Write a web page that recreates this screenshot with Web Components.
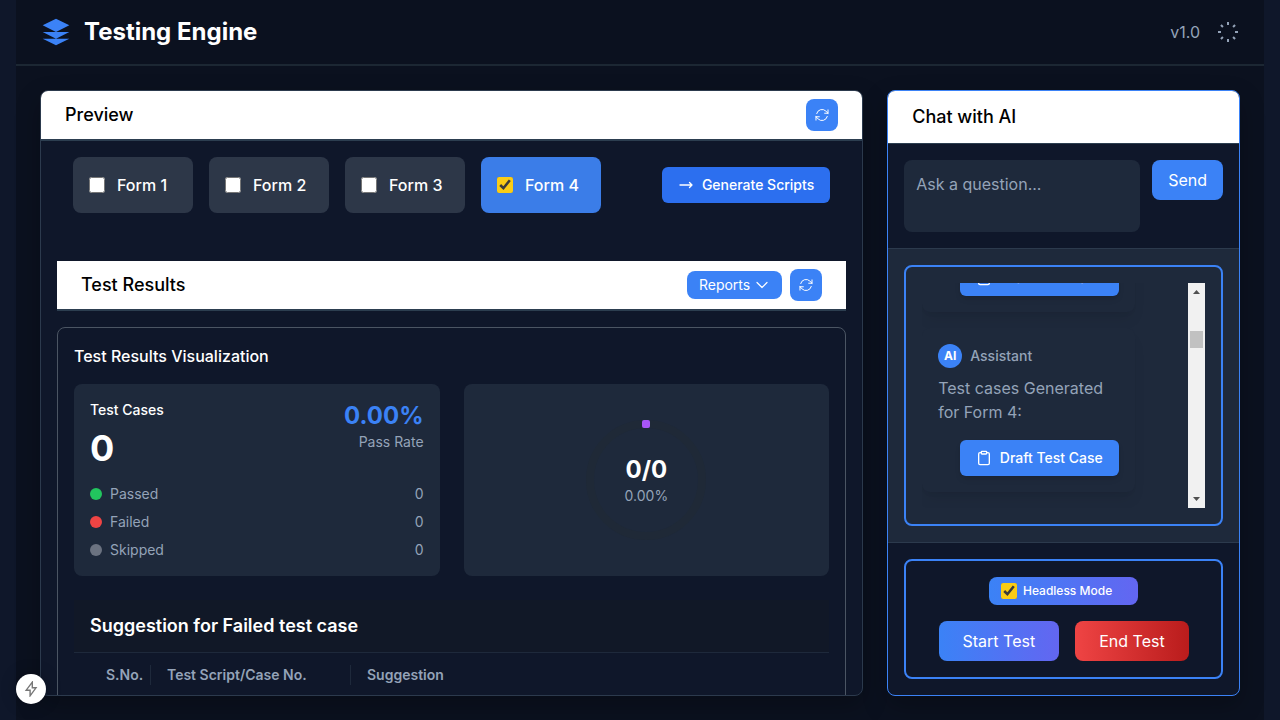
<!DOCTYPE html>
<html lang="en">
<head>
<meta charset="utf-8">
<meta name="viewport" content="width=device-width, initial-scale=1">
<title>Testing Engine</title>
<style>
  :root {
    --blue: #3b82f6;
    --panel: #0f172a;
    --card: #1e293b;
    --muted: #94a3b8;
    --line: #2c3e50;
  }
  body {
    margin: 0;
    background: #0f172a;
    color: #fff;
    font-family: Inter, "Liberation Sans", sans-serif;
    font-size: 16px;
    line-height: 24px;
    overflow: hidden;
  }
</style>
</head>
<body>
<testing-app></testing-app>

<script>
const define = (name, html, setup) => {
  const template = document.createElement('template');
  template.innerHTML = '<style>*{box-sizing:border-box}button,textarea{font:inherit}[hidden]{display:none}</style>' + html;
  customElements.define(name, class extends HTMLElement {
    constructor() {
      super();
      this.attachShadow({ mode: 'open' }).append(template.content.cloneNode(true));
    }
    connectedCallback() {
      if (setup) setup(this, this.shadowRoot);
    }
  });
};

/* ---------- icons ---------- */
const ICONS = {
  refresh: ['24', '1.5', '<path d="M16.023 9.348h4.992v-.001M2.985 19.644v-4.992m0 0h4.992m-4.993 0 3.181 3.183a8.25 8.25 0 0 0 13.803-3.7M4.031 9.865a8.25 8.25 0 0 1 13.803-3.7l3.181 3.182m0-4.991v4.99"/>'],
  arrow: ['24', '2', '<path d="M17.25 8.25 21 12m0 0-3.75 3.75M21 12H3"/>'],
  chevron: ['24', '1.8', '<path d="m19.5 8.25-7.5 7.5-7.5-7.5"/>'],
  clipboard: ['24', '2', '<rect x="8" y="2" width="8" height="4" rx="1"/><path d="M16 4h2a2 2 0 0 1 2 2v14a2 2 0 0 1-2 2H6a2 2 0 0 1-2-2V6a2 2 0 0 1 2-2h2"/>'],
  rays: ['24', '2', '<path stroke-linecap="butt" d="M12 2v3M12 19v3M2 12h3M19 12h3M4.93 4.93l2 2M17.07 17.07l2 2M4.93 19.07l2-2M17.07 6.93l2-2"/>'],
  bolt: ['16', '1.4', '<path stroke-linejoin="miter" d="M9.3 1.2 3.2 9.2h3.9v5.6l5.9-8H9.3z"/>'],
  layers: ['24', '0', '<path fill="currentColor" d="M12 2 2 7l10 5 10-5-10-5zM2 17l10 5 10-5M2 12l10 5 10-5"/>']
};
define('te-icon', `
  <style>
    :host { display: block; width: 16px; height: 16px; flex: none; }
    svg { display: block; width: 100%; height: 100%; }
  </style>
  <svg fill="none" stroke="currentColor" stroke-linecap="round" stroke-linejoin="round" aria-hidden="true"></svg>
`, (el, root) => {
  const [box, stroke, shape] = ICONS[el.getAttribute('name')];
  const svg = root.querySelector('svg');
  svg.setAttribute('viewBox', `0 0 ${box} ${box}`);
  svg.setAttribute('stroke-width', stroke);
  svg.innerHTML = shape;
});

/* ---------- button ---------- */
define('te-button', `
  <style>
    :host { display: block; flex: none; }
    button {
      display: flex; align-items: center; justify-content: center; gap: 8px;
      width: 100%; height: 40px; padding: 0 24px; margin: 0;
      border: 0; border-radius: 8px; background: var(--blue); color: #fff;
      font-size: 16px; line-height: 24px; cursor: pointer; white-space: nowrap;
    }
    :host([kind=send]) button { padding: 0 16px; }
    :host([kind=square]) button { width: 32px; height: 32px; padding: 0; }
    :host([kind=menu]) button { height: 28px; padding: 0 12px; gap: 4px; font-size: 14px; line-height: 20px; }
    :host([kind=action]) button, :host([kind=script]) button {
      height: 36px; padding: 0 16px; border-radius: 6px;
      font-size: 14px; line-height: 20px; font-weight: 500;
    }
    :host([kind=action]) button { box-shadow: 0 4px 6px -1px rgba(0,0,0,.1), 0 2px 4px -2px rgba(0,0,0,.1); }
    :host([kind=script]) button { background: #2c6fef; }
    :host([kind=start]) button { background: linear-gradient(to right, #3b82f6, #6366f1); }
    :host([kind=end]) button { background: linear-gradient(to right, #ef4444, #b91c1c); }
  </style>
  <button type="button"><slot></slot></button>
`, (el, root) => {
  if (el.hasAttribute('label')) root.querySelector('button').setAttribute('aria-label', el.getAttribute('label'));
});

/* ---------- selectable form ---------- */
define('form-option', `
  <style>
    :host { display: block; }
    label {
      display: flex; align-items: center; gap: 12px;
      min-width: 120px; height: 56px; padding: 0 16px;
      border-radius: 8px; background: #2d3748; font-weight: 500; white-space: nowrap;
    }
    :host([checked]) label { background: #3b7de8; }
    input { width: 16px; height: 16px; margin: 0; accent-color: #facc15; }
  </style>
  <label><input type="checkbox"><slot></slot></label>
`, (el, root) => {
  const box = root.querySelector('input');
  box.checked = el.hasAttribute('checked');
  box.onchange = () => el.toggleAttribute('checked', box.checked);
});

/* ---------- white title bar ---------- */
define('title-bar', `
  <style>
    :host { display: block; flex: none; }
    header {
      display: flex; align-items: center; gap: 8px;
      height: 50px; padding: 0 24px; background: #fff; color: #000;
      border-bottom: 2px solid var(--line);
    }
    :host([tall]) header { height: 53px; border-bottom-width: 1px; }
    h2 { flex: 1; margin: 0; font-size: 18px; line-height: 28px; font-weight: 500; }
  </style>
  <header><h2><slot></slot></h2><slot name="actions"></slot></header>
`);

/* ---------- page header ---------- */
define('app-header', `
  <style>
    :host { display: block; flex: none; }
    header {
      display: flex; align-items: center; gap: 12px;
      height: 66px; padding: 0 24px; border-bottom: 2px solid #1c2733;
    }
    .logo { width: 32px; height: 32px; color: var(--blue); }
    h1 { flex: 1; margin: 0; font-size: 24px; line-height: 32px; font-weight: 700; }
    .status { display: flex; align-items: center; gap: 16px; color: var(--muted); }
    .rays { width: 24px; height: 24px; }
  </style>
  <header>
    <te-icon class="logo" name="layers"></te-icon>
    <h1>Testing Engine</h1>
    <div class="status"><span>v1.0</span><te-icon class="rays" name="rays"></te-icon></div>
  </header>
`);

/* ---------- result summary ---------- */
define('result-summary', `
  <style>
    :host { display: block; padding: 16px; border-radius: 8px; background: var(--card); font-size: 14px; line-height: 20px; color: var(--muted); }
    .top { display: flex; justify-content: space-between; margin-bottom: 16px; }
    h4 { margin: 0 0 8px; font-size: 14px; font-weight: 500; color: #fff; }
    .total { font-size: 36px; line-height: 40px; font-weight: 700; color: #fff; }
    .pass { text-align: right; }
    .rate { font-size: 24px; line-height: 32px; font-weight: 700; color: var(--blue); }
    ul { display: grid; gap: 8px; margin: 0; padding: 0; list-style: none; }
    li { display: flex; align-items: center; gap: 8px; }
    .name { flex: 1; }
    i { width: 12px; height: 12px; border-radius: 50%; background: #6b7280; }
    .ok { background: #22c55e; }
    .bad { background: #ef4444; }
  </style>
  <div class="top">
    <div><h4>Test Cases</h4><div class="total">0</div></div>
    <div class="pass"><div class="rate">0.00%</div><div>Pass Rate</div></div>
  </div>
  <ul>
    <li><i class="ok"></i><span class="name">Passed</span><span>0</span></li>
    <li><i class="bad"></i><span class="name">Failed</span><span>0</span></li>
    <li><i></i><span class="name">Skipped</span><span>0</span></li>
  </ul>
`);

/* ---------- progress ring ---------- */
define('result-ring', `
  <style>
    :host { display: grid; place-items: center; border-radius: 8px; background: var(--card); }
    svg, .value { grid-area: 1 / 1; }
    svg { width: 128px; height: 128px; }
    .value { text-align: center; font-size: 14px; line-height: 20px; color: var(--muted); }
    strong { display: block; font-size: 24px; line-height: 32px; font-weight: 700; color: #fff; }
  </style>
  <svg viewBox="0 0 128 128" fill="none" aria-hidden="true">
    <circle cx="64" cy="64" r="56" stroke="#1f2937" stroke-width="8"/>
    <rect x="60" y="4" width="8" height="8" rx="2" fill="#a855f7"/>
  </svg>
  <div class="value"><strong>0/0</strong>0.00%</div>
`);

/* ---------- suggestions ---------- */
define('suggestion-table', `
  <style>
    :host { display: block; }
    h3 {
      margin: 0; padding: 12px 16px; background: #111827;
      border-bottom: 1px solid #1e293b; font-size: 18px; line-height: 28px; font-weight: 600;
    }
    .wrap { padding: 0 16px; }
    table { width: 100%; border-collapse: collapse; table-layout: fixed; font-size: 14px; line-height: 20px; color: var(--muted); }
    th { padding: 12px 0; text-align: left; font-weight: 600; }
    th span { display: block; padding-left: 16px; white-space: nowrap; }
    .no { width: 61px; }
    .case { width: 200px; }
    .no span, .case span { border-right: 1px solid #1e293b; }
  </style>
  <h3>Suggestion for Failed test case</h3>
  <div class="wrap">
    <table>
      <thead><tr>
        <th class="no" scope="col"><span>S.No.</span></th>
        <th class="case" scope="col"><span>Test Script/Case No.</span></th>
        <th scope="col"><span>Suggestion</span></th>
      </tr></thead>
    </table>
  </div>
`);

/* ---------- left panel ---------- */
define('preview-panel', `
  <style>
    :host {
      display: block; min-width: 0; overflow: hidden;
      border: 1px solid #2c3a4d; border-radius: 8px; background: var(--panel);
      box-shadow: 0 10px 24px rgba(0,0,0,.25);
    }
    .body { padding: 16px; }
    .forms { display: flex; align-items: center; gap: 16px; padding: 0 16px; margin-bottom: 48px; }
    .forms te-button { margin-left: auto; }
    .results { margin-top: 16px; padding: 16px; border: 1px solid #4b5563; border-radius: 8px; }
    h3 { margin: 0 0 16px; font-size: 16px; line-height: 24px; font-weight: 500; }
    .charts { display: grid; grid-template-columns: 1fr 1fr; gap: 24px; margin-bottom: 24px; }
  </style>
  <title-bar>Preview
    <te-button slot="actions" kind="square" label="Refresh preview"><te-icon name="refresh"></te-icon></te-button>
  </title-bar>
  <div class="body">
    <div class="forms">
      <form-option>Form 1</form-option>
      <form-option>Form 2</form-option>
      <form-option>Form 3</form-option>
      <form-option checked>Form 4</form-option>
      <te-button kind="script"><te-icon name="arrow"></te-icon>Generate Scripts</te-button>
    </div>
    <title-bar>Test Results
      <te-button slot="actions" kind="menu">Reports<te-icon name="chevron"></te-icon></te-button>
      <te-button slot="actions" kind="square" label="Refresh results"><te-icon name="refresh"></te-icon></te-button>
    </title-bar>
    <section class="results">
      <h3>Test Results Visualization</h3>
      <div class="charts"><result-summary></result-summary><result-ring></result-ring></div>
      <suggestion-table></suggestion-table>
    </section>
  </div>
`);

/* ---------- chat message ---------- */
define('chat-message', `
  <style>
    :host {
      display: block; flex: none; width: 80%; padding: 16px; border-radius: 8px;
      background: var(--card); color: var(--muted);
      box-shadow: 0 10px 15px -3px rgba(0,0,0,.07), 0 4px 6px -4px rgba(0,0,0,.07);
    }
    .who { display: flex; align-items: center; gap: 8px; font-size: 14px; line-height: 20px; font-weight: 500; }
    .avatar {
      display: grid; place-items: center; width: 24px; height: 24px; border-radius: 50%;
      background: var(--blue); color: #fff; font-size: 12px; line-height: 16px; font-weight: 700;
    }
    p { margin: 8px 0 16px; }
    .action { display: flex; justify-content: flex-end; }
  </style>
  <div class="who"><span class="avatar">AI</span>Assistant</div>
  <p><slot></slot></p>
  <div class="action"><te-button kind="action"><te-icon name="clipboard"></te-icon>Draft Test Case</te-button></div>
`);

define('scroll-track', `
  <style>
    :host { display: flex; flex-direction: column; align-items: center; flex: none; width: 17px; background: #f1f1f1; }
    svg { display: block; width: 17px; height: 17px; flex: none; }
    .thumb { width: 13px; height: 17px; background: #c1c1c1; }
    .before { flex: 31; }
    .after { flex: 143; }
  </style>
  <svg viewBox="0 0 17 17" aria-hidden="true"><path fill="#505050" d="M5 11 8.5 7 12 11z"/></svg>
  <div class="before"></div><div class="thumb"></div><div class="after"></div>
  <svg viewBox="0 0 17 17" aria-hidden="true"><path fill="#505050" d="M5 6 8.5 10 12 6z"/></svg>
`);

/* ---------- right panel ---------- */
define('chat-panel', `
  <style>
    :host {
      display: flex; flex-direction: column; min-width: 0; overflow: hidden;
      border: 1px solid var(--blue); border-radius: 8px; background: var(--panel);
      box-shadow: 0 10px 24px rgba(0,0,0,.25);
    }
    .ask { display: flex; align-items: flex-start; gap: 12px; padding: 16px; border-bottom: 1px solid #2c3a4d; }
    textarea {
      display: block; flex: 1; min-width: 0; height: 72px; padding: 12px; margin: 0; border: 0; border-radius: 8px;
      background: var(--card); color: #fff; resize: none; overflow: hidden;
    }
    textarea::placeholder { color: var(--muted); opacity: 1; }
    .log { display: flex; flex: 1; min-height: 0; padding: 16px; background: var(--card); border-bottom: 1px solid #2c3a4d; }
    .frame { border: 2px solid var(--blue); border-radius: 8px; padding: 16px; }
    .log .frame { display: flex; flex: 1; min-width: 0; }
    .messages { display: flex; flex: 1; min-width: 0; flex-direction: column; justify-content: flex-end; gap: 16px; padding-bottom: 16px; overflow: hidden; }
    .run { padding: 16px; }
    .run .frame { display: grid; justify-items: center; gap: 16px; }
    .headless {
      display: flex; align-items: center; gap: 6px; height: 28px; padding: 0 26px 0 12px; border-radius: 8px;
      background: linear-gradient(to right, #3b82f6, #6366f1); font-size: 12px; line-height: 16px; font-weight: 500;
    }
    .headless input { width: 16px; height: 16px; margin: 0; accent-color: #facc15; }
    .buttons { display: flex; gap: 16px; }
  </style>
  <title-bar tall>Chat with AI</title-bar>
  <div class="ask">
    <textarea aria-label="Ask a question" placeholder="Ask a question..."></textarea>
    <te-button kind="send">Send</te-button>
  </div>
  <div class="log"><div class="frame">
    <div class="messages">
      <chat-message>Test cases Generated for Form 4:</chat-message>
      <chat-message>Test cases Generated for Form 4:</chat-message>
    </div>
    <scroll-track></scroll-track>
  </div></div>
  <div class="run"><div class="frame">
    <label class="headless"><input type="checkbox" checked>Headless Mode</label>
    <div class="buttons"><te-button kind="start">Start Test</te-button><te-button kind="end">End Test</te-button></div>
  </div></div>
`);

/* ---------- floating badge ---------- */
define('quick-badge', `
  <style>
    :host { position: fixed; left: 16px; bottom: 16px; }
    button {
      display: grid; place-items: center; width: 30px; height: 30px; padding: 0; border: 0; border-radius: 50%;
      background: #fff; color: #777; box-shadow: 0 0 16px rgba(0,0,0,.25);
    }
  </style>
  <button type="button" aria-label="Quick actions"><te-icon name="bolt"></te-icon></button>
`);

define('testing-app', `
  <style>
    :host { display: flex; flex-direction: column; height: 100vh; margin: 0 16px; background: #0b111f; }
    main { display: grid; grid-template-columns: 7fr 3fr; grid-template-rows: minmax(0, 1fr); gap: 24px; flex: 1; min-height: 0; padding: 24px; }
  </style>
  <app-header></app-header>
  <main><preview-panel></preview-panel><chat-panel></chat-panel></main>
  <quick-badge></quick-badge>
`);
</script>
</body>
</html>
